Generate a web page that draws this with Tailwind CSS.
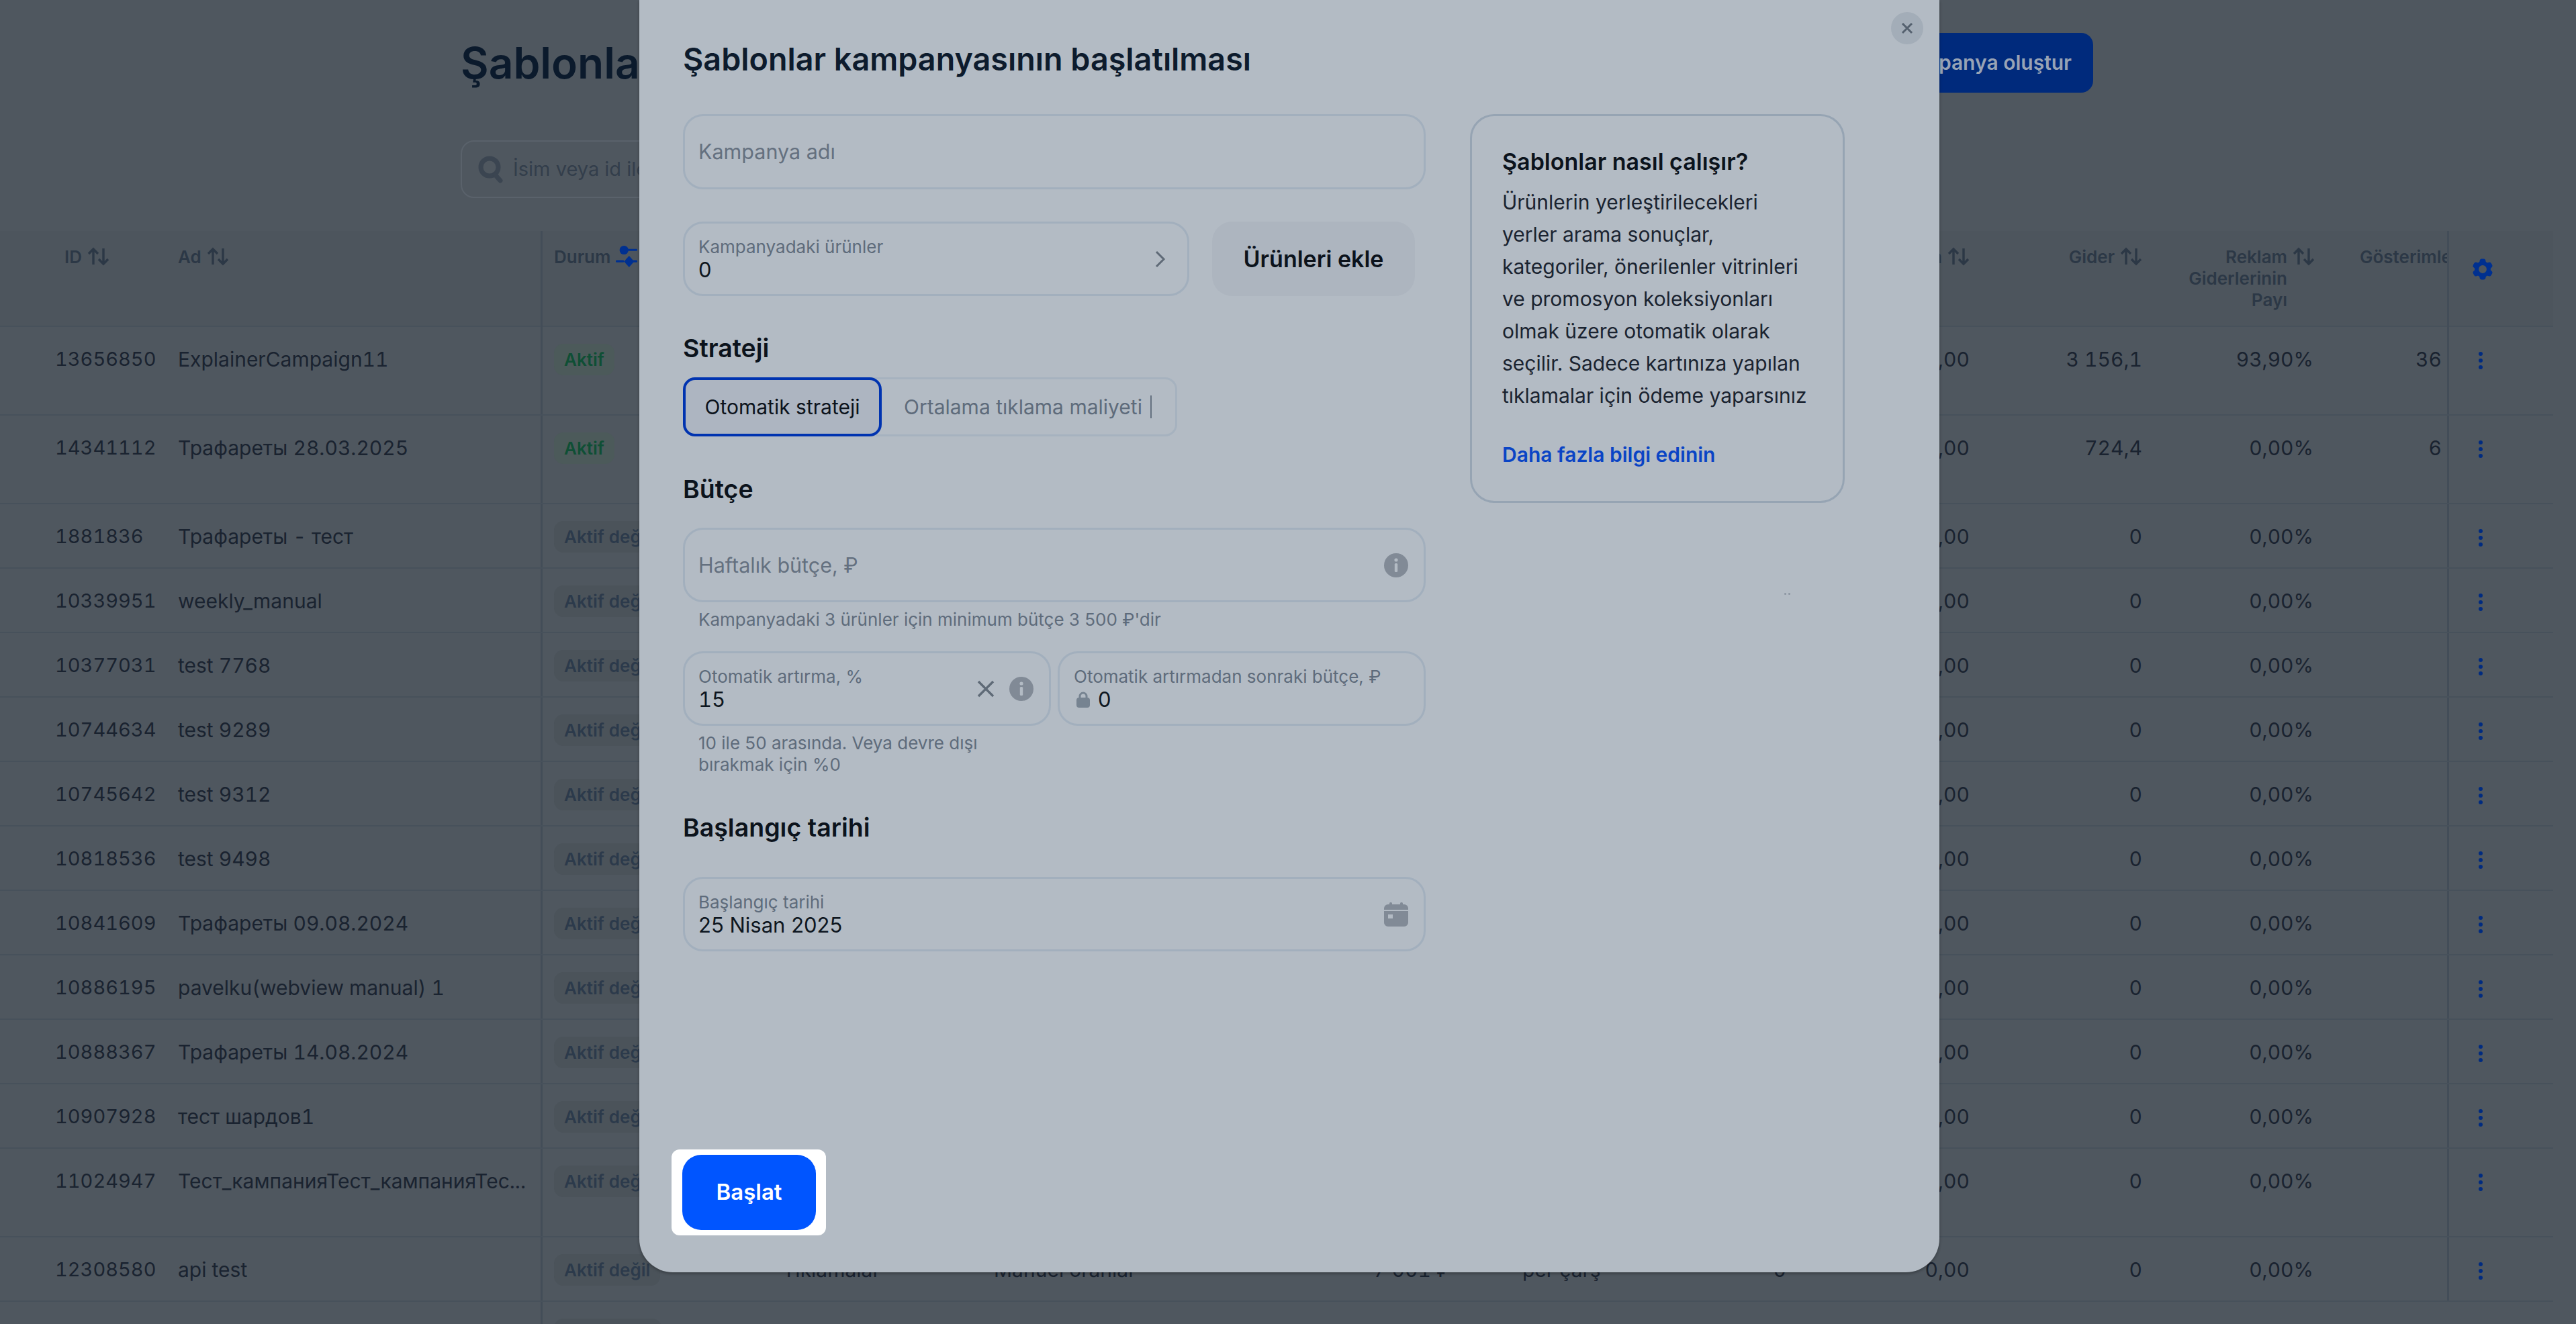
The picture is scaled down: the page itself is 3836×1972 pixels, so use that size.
<!DOCTYPE html>
<html lang="tr">

<head>
    <meta charset="UTF-8" />
    <meta name="viewport" content="width=device-width, initial-scale=1.0" />
    <title>Şablonlar</title>
    <script src="https://cdn.jsdelivr.net/npm/@tailwindcss/browser@4"></script>
</head>

<body class="bg-[#4f575f] font-[Inter,sans-serif] text-[#1a2330]">
    <svg class="hidden">
        <symbol id="sort" viewBox="0 0 33 30">
            <path d="M9 27V4M2 11l7-7 7 7M24 3v23M17 19l7 7 7-7" fill="none" stroke="currentColor" stroke-width="3.4" />
        </symbol>
        <symbol id="info" viewBox="0 0 36 36">
            <circle cx="18" cy="18" r="18" fill="#818a96" />
            <circle cx="18" cy="10" r="2.6" fill="#b3bbc4" />
            <rect x="15.8" y="15" width="4.4" height="13" rx="1.6" fill="#b3bbc4" />
        </symbol>
    </svg>

    <!-- Page behind the modal -->
    <main class="relative w-[3836px] h-[1972px] overflow-hidden">
        <div class="flex items-center justify-between pt-[49px] pl-[686px] pr-[719px]">
            <h1 class="text-[64px] leading-[89px] font-semibold text-[#0b1a2c]">Şablonlar</h1>
            <button class="h-[89px] w-[500px] rounded-[18px] bg-[#002a7c] text-right pr-[32px] text-[30px] font-semibold text-[#98a3b5]">Kampanya oluştur</button>
        </div>

        <div class="mt-[71px] ml-[686px] flex h-[86px] w-[900px] items-center gap-[14px] rounded-[20px] border-2 border-[#5a626b] pl-[24px] text-[29px] text-[#333e4b]">
            <svg class="w-[38px] h-[42px]" viewBox="0 0 38 42" fill="none" stroke="#3b4551">
                <circle cx="17" cy="18" r="13" stroke-width="7" />
                <path d="M25 29l8 9" stroke-width="7" stroke-linecap="round" />
            </svg>
            <span>İsim veya id ile ara</span>
        </div>

        <!-- Table -->
        <div class="mt-[49px] w-[3802px] text-[30px] tabular-nums">
            <div class="grid h-[143px] grid-cols-[265px_540px_360px_315px_420px_260px_340px_160px_273px_257px_255px_199px_158px] border-b-2 border-[#47515b] bg-[#4d555d] pt-[23px] text-[26px] leading-[32px] font-semibold text-[#2c3846]">
                <div class="flex items-start gap-[8px] pl-[96px]">ID <svg class="w-[33px] h-[30px]"><use href="#sort" /></svg></div>
                <div class="flex items-start gap-[8px]">Ad <svg class="w-[33px] h-[30px]"><use href="#sort" /></svg></div>
                <div class="-mt-[23px] flex h-[143px] items-start gap-[8px] border-l-[3px] border-[#434d58] pt-[23px] pl-[17px]">
                    Durum
                    <svg class="mt-[-4px] w-[32px] h-[36px]" viewBox="0 0 34 36" fill="#003090">
                        <circle cx="13" cy="9" r="7" />
                        <rect x="14" y="7" width="20" height="3.4" rx="1.5" />
                        <rect x="0" y="25" width="13" height="3.4" rx="1.5" />
                        <path d="M21 18l8 9-8 9-8-9z" />
                        <rect x="22" y="25" width="12" height="3.4" rx="1.5" />
                    </svg>
                </div>
                <div></div>
                <div></div>
                <div></div>
                <div></div>
                <div></div>
                <div class="flex items-start justify-end gap-[8px]">Tıklama <svg class="w-[33px] h-[30px]"><use href="#sort" /></svg></div>
                <div class="flex items-start justify-end gap-[8px]">Gider <svg class="w-[33px] h-[30px]"><use href="#sort" /></svg></div>
                <div class="-mr-[2px] flex items-start justify-end gap-[8px] text-right">
                    <span class="w-[150px]">Reklam Giderlerinin Payı</span>
                    <svg class="w-[33px] h-[30px] shrink-0"><use href="#sort" /></svg>
                </div>
                <div class="overflow-hidden pl-[69px] whitespace-nowrap">Gösterimler</div>
                <div class="-mt-[23px] flex h-[143px] items-center border-l-[3px] border-[#434d58] pl-[31px]">
                    <svg class="mb-[30px] w-[38px] h-[38px]" viewBox="0 0 24 24" fill="#003090">
                        <path fill-rule="evenodd" d="M11.078 2.25c-.917 0-1.699.663-1.85 1.567L9.05 4.889c-.02.12-.115.26-.297.348a7.493 7.493 0 0 0-.986.57c-.166.115-.334.126-.45.083L6.3 5.508a1.875 1.875 0 0 0-2.282.819l-.922 1.597a1.875 1.875 0 0 0 .432 2.385l.84.692c.095.078.17.229.154.43a7.598 7.598 0 0 0 0 1.139c.015.2-.059.352-.153.43l-.841.692a1.875 1.875 0 0 0-.432 2.385l.922 1.597a1.875 1.875 0 0 0 2.282.818l1.019-.382c.115-.043.283-.031.45.082.312.214.641.405.985.57.182.088.277.228.297.35l.178 1.071c.151.904.933 1.567 1.85 1.567h1.844c.916 0 1.699-.663 1.85-1.567l.178-1.072c.02-.12.114-.26.297-.349.344-.165.673-.356.985-.57.167-.114.335-.125.45-.082l1.02.382a1.875 1.875 0 0 0 2.28-.819l.923-1.597a1.875 1.875 0 0 0-.432-2.385l-.84-.692c-.095-.078-.17-.229-.154-.43a7.614 7.614 0 0 0 0-1.139c-.016-.2.059-.352.153-.43l.84-.692c.708-.582.891-1.59.433-2.385l-.922-1.597a1.875 1.875 0 0 0-2.282-.818l-1.02.382c-.114.043-.282.031-.449-.083a7.49 7.49 0 0 0-.985-.57c-.183-.087-.277-.227-.297-.348l-.179-1.072a1.875 1.875 0 0 0-1.85-1.567h-1.843ZM12 15.75a3.75 3.75 0 1 0 0-7.5 3.75 3.75 0 0 0 0 7.5Z" />
                    </svg>
                </div>
            </div>
            <div id="rows"></div>
        </div>

        <!-- Modal -->
        <section class="absolute top-0 left-[952px] flex h-[1895px] w-[1936px] flex-col rounded-b-[50px] bg-[#b3bbc4] pt-[56px] pl-[65px] shadow-[0_2px_4px_rgba(0,0,0,0.3)]">
            <button class="absolute top-[18px] left-[1864px] flex h-[48px] w-[48px] items-center justify-center rounded-full bg-[#a3adb8]">
                <svg class="w-[20px] h-[20px]" viewBox="0 0 20 20" fill="none" stroke="#55616f" stroke-width="3">
                    <path d="M3 3l14 14M17 3L3 17" />
                </svg>
            </button>
            <div class="absolute top-[883px] left-[1705px] h-[3px] w-[3px] rounded-full bg-[#8a94a0] shadow-[6px_0_0_#8a94a0]"></div>

            <h2 class="text-[46.7px] leading-[64px] font-semibold text-[#0d1b2d]">Şablonlar kampanyasının başlatılması</h2>

            <div class="flex">
                <!-- Form -->
                <div class="w-[1106px]">
                    <div class="mt-[50px] flex h-[112px] items-center rounded-[30px] border-[3px] border-[#a2afbd] pl-[20px] text-[30.5px] text-[#64707f]">Kampanya adı</div>

                    <div class="mt-[48px] flex gap-[34px]">
                        <div class="flex h-[111px] w-[754px] items-center justify-between rounded-[30px] border-[3px] border-[#a2afbd] pr-[32px] pl-[20px]">
                            <div>
                                <div class="text-[26px] leading-[32px] text-[#5e6b7b]">Kampanyadaki ürünler</div>
                                <div class="text-[31px] leading-[36px] text-[#0e1620]">0</div>
                            </div>
                            <svg class="w-[16px] h-[26px]" viewBox="0 0 16 26" fill="none" stroke="#5f6a77" stroke-width="3">
                                <path d="M2 2l11 11L2 24" />
                            </svg>
                        </div>
                        <button class="h-[111px] w-[302px] rounded-[30px] bg-[#adb5bf] text-[34px] font-semibold text-[#0c131c]">Ürünleri ekle</button>
                    </div>

                    <h3 class="mt-[54px] text-[37.5px] leading-[48px] font-semibold text-[#0c131c]">Strateji</h3>
                    <div class="mt-[19px] flex h-[88px] w-[736px] items-center rounded-[18px] border-[3px] border-[#a6b2bf] text-[30px]">
                        <div class="-ml-[3px] flex h-[88px] w-[296px] items-center justify-center rounded-[18px] border-[4px] border-[#0033b0] bg-[#adb5c1] text-[#0c131c]">Otomatik strateji</div>
                        <div class="ml-[33px] text-[#5e6b7b]">Ortalama tıklama maliyeti</div>
                        <div class="ml-[12px] h-[34px] w-[2px] bg-[#64707f]"></div>
                    </div>

                    <h3 class="mt-[55px] text-[37.5px] leading-[48px] font-semibold text-[#0c131c]">Bütçe</h3>
                    <div class="mt-[33px] flex h-[111px] items-center justify-between rounded-[30px] border-[3px] border-[#a2afbd] pr-[23px] pl-[20px] text-[30.5px] text-[#64707f]">
                        Haftalık bütçe, ₽
                        <svg class="w-[36px] h-[36px]"><use href="#info" /></svg>
                    </div>
                    <p class="mt-[10px] pl-[23px] text-[26px] leading-[32px] text-[#5e6b7b]">Kampanyadaki 3 ürünler için minimum bütçe 3 500 ₽'dir</p>

                    <div class="mt-[31px] flex gap-[10px]">
                        <div class="flex h-[111px] w-[548px] items-center justify-between rounded-[30px] border-[3px] border-[#a2afbd] pr-[23px] pl-[20px]">
                            <div>
                                <div class="text-[26px] leading-[32px] text-[#5e6b7b]">Otomatik artırma, %</div>
                                <div class="text-[31px] leading-[36px] tabular-nums text-[#0e1620]">15</div>
                            </div>
                            <div class="flex items-center gap-[22px]">
                                <svg class="w-[26px] h-[26px]" viewBox="0 0 26 26" fill="none" stroke="#5f6a77" stroke-width="3.4">
                                    <path d="M2 2l22 22M24 2L2 24" />
                                </svg>
                                <svg class="w-[36px] h-[36px]"><use href="#info" /></svg>
                            </div>
                        </div>
                        <div class="flex h-[111px] w-[548px] items-center rounded-[30px] border-[3px] border-[#a2afbd] pl-[21px]">
                            <div>
                                <div class="text-[26px] leading-[32px] whitespace-nowrap text-[#5e6b7b]">Otomatik artırmadan sonraki bütçe, ₽</div>
                                <div class="flex items-center gap-[12px] text-[31px] leading-[36px] text-[#0e1620]">
                                    <svg class="ml-[4px] w-[20px] h-[24px]" viewBox="0 0 20 24">
                                        <path d="M5 11V7a5 5 0 0 1 10 0v4" fill="none" stroke="#768391" stroke-width="3" />
                                        <rect x="0" y="9" width="20" height="15" rx="4" fill="#768391" />
                                    </svg>
                                    0
                                </div>
                            </div>
                        </div>
                    </div>
                    <p class="mt-[10px] w-[480px] pl-[23px] text-[26px] leading-[32px] text-[#5e6b7b]">10 ile 50 arasında. Veya devre dışı bırakmak için %0</p>

                    <h3 class="mt-[54px] text-[37.5px] leading-[48px] font-semibold text-[#0c131c]">Başlangıç tarihi</h3>
                    <div class="mt-[49px] flex h-[111px] items-center justify-between rounded-[30px] border-[3px] border-[#a2afbd] pr-[23px] pl-[20px]">
                        <div>
                            <div class="text-[26px] leading-[32px] text-[#5e6b7b]">Başlangıç tarihi</div>
                            <div class="text-[31px] leading-[36px] text-[#0e1620]">25 Nisan 2025</div>
                        </div>
                        <svg class="w-[36px] h-[36px]" viewBox="0 0 36 36" fill="#818a96">
                            <rect x="8" y="0" width="4" height="6" rx="1.5" />
                            <rect x="24" y="0" width="4" height="6" rx="1.5" />
                            <path d="M6 3h24a6 6 0 0 1 6 6v2H0V9a6 6 0 0 1 6-6z" />
                            <path fill-rule="evenodd" d="M0 13h36v17a6 6 0 0 1-6 6H6a6 6 0 0 1-6-6zM6 18v6h7v-6z" />
                        </svg>
                    </div>
                </div>

                <!-- Help card -->
                <aside class="mt-[50px] ml-[66px] h-[579px] w-[558px] rounded-[36px] border-[3px] border-[#96a4b3] pt-[44px] pl-[45px]">
                    <h4 class="text-[34px] leading-[48px] font-semibold text-[#0c131c]">Şablonlar nasıl çalışır?</h4>
                    <p class="mt-[12px] text-[30px] leading-[48px] whitespace-nowrap text-[#1a2330]">Ürünlerin yerleştirilecekleri<br />yerler arama sonuçlar,<br />kategoriler, önerilenler vitrinleri<br />ve promosyon koleksiyonları<br />olmak üzere otomatik olarak<br />seçilir. Sadece kartınıza yapılan<br />tıklamalar için ödeme yaparsınız</p>
                    <a class="mt-[40px] block text-[30px] leading-[48px] font-semibold text-[#0a44c5]">Daha fazla bilgi edinin</a>
                </aside>
            </div>

            <div class="mt-auto mb-[55px] -ml-[17px] w-[230px] rounded-[12px] bg-white py-[8px] pr-[15px] pl-[16px]">
                <button class="h-[112px] w-[199px] rounded-[28px] bg-[#0055ff] text-[33px] font-semibold text-white">Başlat</button>
            </div>
        </section>
    </main>

    <script>
        const rows = [
            { id: "13656850", name: "ExplainerCampaign11", active: true, spend: "3 156,1", share: "93,90%", views: "36", tall: true },
            { id: "14341112", name: "Трафареты 28.03.2025", active: true, spend: "724,4", views: "6", tall: true },
            { id: "1881836", name: "Трафареты - тест" },
            { id: "10339951", name: "weekly_manual" },
            { id: "10377031", name: "test 7768" },
            { id: "10744634", name: "test 9289" },
            { id: "10745642", name: "test 9312" },
            { id: "10818536", name: "test 9498" },
            { id: "10841609", name: "Трафареты 09.08.2024" },
            { id: "10886195", name: "pavelku(webview manual) 1" },
            { id: "10888367", name: "Трафареты 14.08.2024" },
            { id: "10907928", name: "тест шардов1" },
            { id: "11024947", name: "Тест_кампанияТест_кампанияТес...", tall: true },
            { id: "12308580", name: "api test", type: "Tıklamalar", strategy: "Manuel oranlar", budget: "7 001 ₽", period: "per çarş", clicks: "0" },
        ];

        const badge = (active) => active
            ? '<span class="inline-flex h-[47px] items-center rounded-[14px] bg-[#4c5a5a] px-[15px] text-[26px] font-semibold text-[#0f4f35]">Aktif</span>'
            : '<span class="inline-flex h-[47px] items-center rounded-[14px] bg-[#4b535a] px-[15px] text-[26px] font-semibold whitespace-nowrap text-[#2c3a4b]">Aktif değil</span>';

        const kebab = '<svg class="w-[8px] h-[30px]" viewBox="0 0 8 30" fill="#002b80"><circle cx="4" cy="5" r="3" /><circle cx="4" cy="15" r="3" /><circle cx="4" cy="25" r="3" /></svg>';

        document.getElementById("rows").innerHTML = rows.map((r) => `
            <div class="grid ${r.tall ? "h-[132px]" : "h-[96px]"} grid-cols-[265px_540px_360px_315px_420px_260px_340px_160px_273px_257px_255px_199px_158px] border-b-2 border-[#47515b] leading-[36px]">
                <div class="pt-[30px] pl-[82px] text-[29px]">${r.id}</div>
                <div class="pt-[30px] whitespace-nowrap">${r.name}</div>
                <div class="border-l-[3px] border-[#434d58] pt-[25px] pl-[17px]">${badge(r.active)}</div>
                <div class="pt-[30px]">${r.type || ""}</div>
                <div class="pt-[30px]">${r.strategy || ""}</div>
                <div class="pt-[30px] text-right">${r.budget || ""}</div>
                <div class="pt-[30px] pl-[107px]">${r.period || ""}</div>
                <div class="pt-[30px] text-right">${r.clicks || ""}</div>
                <div class="pt-[30px] text-right">0,00</div>
                <div class="pt-[30px] text-right">${r.spend || "0"}</div>
                <div class="pt-[30px] text-right">${r.share || "0,00%"}</div>
                <div class="pt-[30px] pr-[8px] text-right">${r.views || ""}</div>
                <div class="border-l-[3px] border-[#434d58] pt-[35px] pl-[43px]">${kebab}</div>
            </div>`).join("") + `
            <div class="grid h-[40px] grid-cols-[265px_540px_360px] overflow-hidden">
                <div></div>
                <div></div>
                <div class="border-l-[3px] border-[#434d58] pt-[25px] pl-[17px]"><span class="block h-[47px] w-[160px] rounded-[14px] bg-[#4b535a]"></span></div>
            </div>`;
    </script>
</body>

</html>
